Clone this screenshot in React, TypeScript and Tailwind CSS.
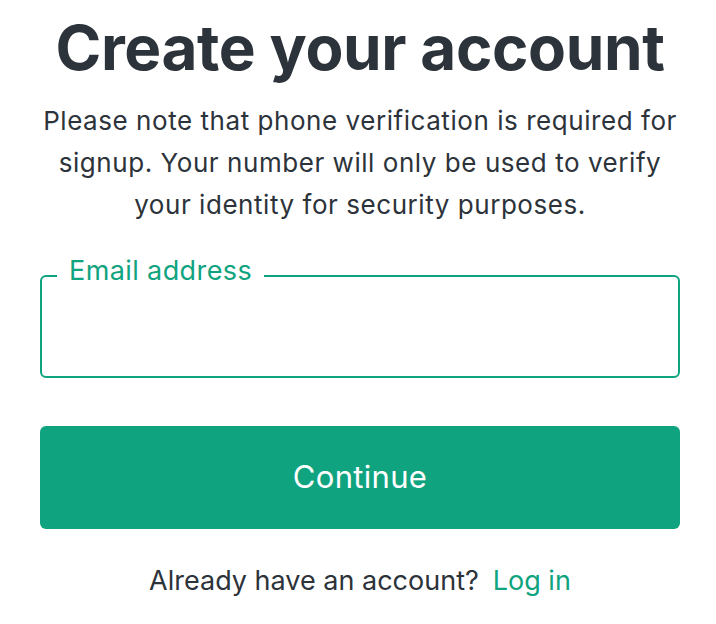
export default function App() {
  return (
    <div className="min-h-screen bg-white font-['Inter','Liberation_Sans',sans-serif] text-[#2d333a]">
      <div className="ml-10 w-[640px] flex flex-col">
        <h1 className="mt-[12px] text-center text-[62px] leading-[72px] font-bold tracking-[-0.4px]">
          Create your account
        </h1>

        <p className="mt-4 text-center text-[26px] leading-[42px] tracking-[0.55px]">
          Please note that phone verification is required for signup. Your number will only be used to verify your identity for security purposes.
        </p>

        <div className="relative mt-[49px] h-[103px] rounded-md border-2 border-[#10a37f]">
          <label className="absolute left-[15px] top-[-22px] bg-white px-3 text-[27px] leading-[32px] tracking-[0.4px] text-[#10a37f]">
            Email address
          </label>
          <input type="email" className="h-full w-full bg-transparent px-6 text-[24px] outline-none" />
        </div>

        <button className="mt-12 h-[103px] rounded-md bg-[#10a37f] text-[31px] tracking-[0.3px] text-white">
          Continue
        </button>

        <div className="mt-9 text-center text-[27px] leading-[32px]">
          Already have an account?
          <a href="#" className="ml-[14px] text-[#10a37f]">
            Log in
          </a>
        </div>
      </div>
    </div>
  );
}
